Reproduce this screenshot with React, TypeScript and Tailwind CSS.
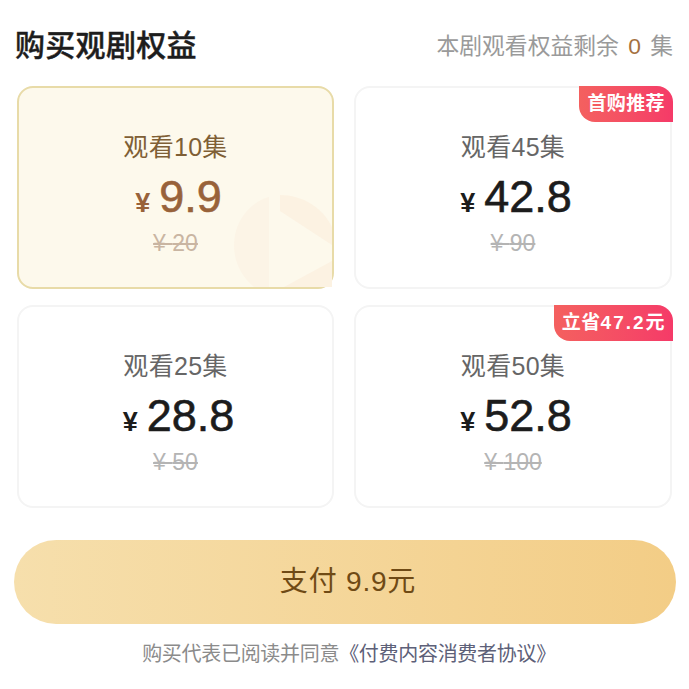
import type { ReactNode } from "react";

type Plan = { label: string; price: string; old: string; active?: boolean; badge?: ReactNode };

const plans: Plan[] = [
  { label: "观看10集", price: "9.9", old: "20", active: true },
  { label: "观看45集", price: "42.8", old: "90", badge: "首购推荐" },
  { label: "观看25集", price: "28.8", old: "50" },
  { label: "观看50集", price: "52.8", old: "100", badge: <>立省<span className="tracking-[2px]">47.2</span>元</> },
];

const font = "font-['Liberation_Sans','Noto_Sans_CJK_SC',sans-serif]";

const Card = ({ plan }: { plan: Plan }) => {
  return (
    <div
      className={
        plan.active
          ? "relative h-[203px] rounded-2xl border-2 border-[#e8dba8] bg-[#fdf9ec] flex flex-col items-center"
          : "relative h-[203px] rounded-2xl border-2 border-[#f4f4f4] bg-white flex flex-col items-center"
      }
    >
      {plan.active && (
        <svg className="absolute right-0 bottom-0" width="98" height="92" viewBox="0 0 98 92">
          <path d="M35 2 C14 8 0 28 0 50 C0 68 8 82 20 92 L35 92 Z" fill="#fcf4e6" />
          <path d="M46 0 C68 0 88 12 98 32 L98 50 L46 16 Z" fill="#fcf2e2" />
          <path d="M98 66 L98 92 L50 92 Z" fill="#fcf2e2" />
        </svg>
      )}
      {plan.badge && (
        <div className="absolute -top-0.5 -right-[3px] h-[36px] px-[8px] flex items-center rounded-tr-2xl rounded-bl-2xl bg-gradient-to-r from-[#f4605f] to-[#f53a68] text-white text-[19px] font-bold tracking-[0.4px]">
          {plan.badge}
        </div>
      )}
      <div className={plan.active ? "relative mt-[43px] text-[25px] leading-[32px] tracking-[0.3px] text-[#7f5f35]" : "relative mt-[43px] text-[25px] leading-[32px] tracking-[0.3px] text-[#666666]"}>
        {plan.label}
      </div>
      <div className={plan.active ? "relative mt-[10px] pl-[6px] flex items-baseline gap-[9px] text-[#98623a]" : "relative mt-[10px] pl-[6px] flex items-baseline gap-[9px] text-[#1c1c1c]"}>
        <span className="text-[27px] leading-[48px] font-bold">¥</span>
        <span className="text-[45px] leading-[48px] font-medium [-webkit-text-stroke:0.6px_currentColor]">{plan.price}</span>
      </div>
      <div className={plan.active ? "relative mt-[2px] text-[23px] leading-[28px] text-[#c9b5a2] line-through" : "relative mt-[2px] text-[23px] leading-[28px] text-[#b4b4b4] line-through"}>
        ¥ {plan.old}
      </div>
    </div>
  );
};

const App = () => {
  return (
    <div className={`w-[689px] h-[689px] overflow-hidden bg-white pt-[26px] ${font}`}>
      <div className="flex items-center justify-between pl-[15px] pr-[16px] h-[40px]">
        <h1 className="text-[30px] leading-[40px] tracking-[0.3px] font-medium text-[#1d1d1d] [-webkit-text-stroke:0.4px_#1d1d1d]">购买观剧权益</h1>
        <div className="text-[22.8px] text-[#9a9a9a]">
          本剧观看权益剩余 <span className="mx-[3px] text-[#a5713f]">0</span> 集
        </div>
      </div>
      <div className="grid grid-cols-[317px_318px] gap-x-[20px] gap-y-[16px] pl-[17px] mt-[20px]">
        {plans.map((plan, index) => (
          <Card plan={plan} key={index} />
        ))}
      </div>
      <div className="ml-[14px] w-[662px] mt-[32px] h-[84px] pl-[6px] rounded-full bg-gradient-to-r from-[#f6dfac] to-[#f3cd86] flex items-center justify-center text-[28px] tracking-[0.8px] text-[#6f4a15]">
        支付 9.9元
      </div>
      <div className="mt-[16px] pl-[9px] text-center text-[20px] leading-[28px] tracking-[-0.3px] text-[#8b8b8b]">
        购买代表已阅读并同意<span className="text-[#5d6078]">《付费内容消费者协议》</span>
      </div>
    </div>
  );
};

export default App;
